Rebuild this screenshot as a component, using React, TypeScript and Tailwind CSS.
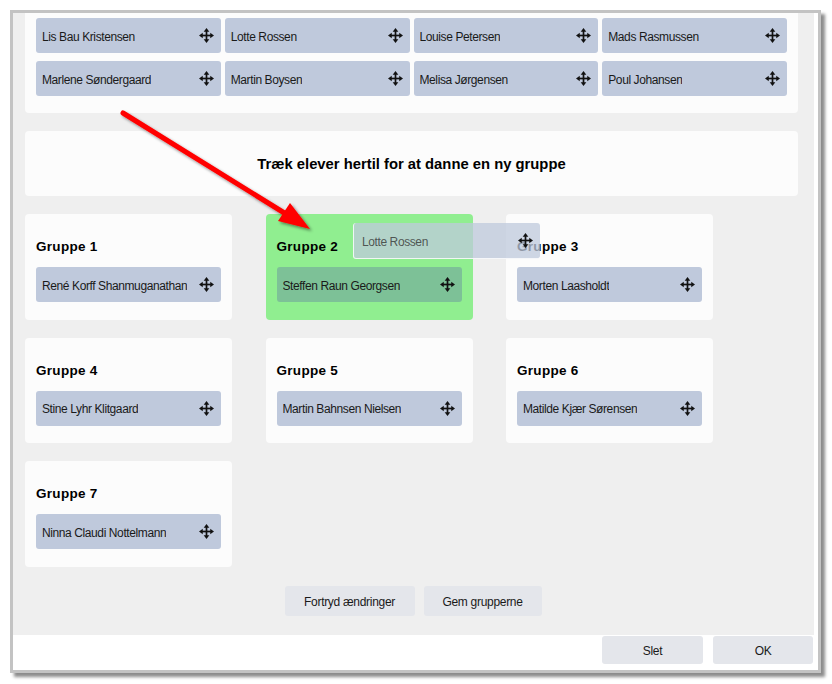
import type { ReactNode } from 'react';

const unassigned = [
  'Lis Bau Kristensen',
  'Lotte Rossen',
  'Louise Petersen',
  'Mads Rasmussen',
  'Marlene Søndergaard',
  'Martin Boysen',
  'Melisa Jørgensen',
  'Poul Johansen',
];

const groups = [
  { name: 'Gruppe 1', members: ['René Korff Shanmuganathan'] },
  { name: 'Gruppe 2', members: ['Steffen Raun Georgsen'], over: true },
  { name: 'Gruppe 3', members: ['Morten Laasholdt'] },
  { name: 'Gruppe 4', members: ['Stine Lyhr Klitgaard'] },
  { name: 'Gruppe 5', members: ['Martin Bahnsen Nielsen'] },
  { name: 'Gruppe 6', members: ['Matilde Kjær Sørensen'] },
  { name: 'Gruppe 7', members: ['Ninna Claudi Nottelmann'] },
];

function MoveIcon() {
  return (
    <svg width="15" height="15" viewBox="0 0 16 16" className="shrink-0 text-[#111]">
      <rect x="7.1" y="3" width="1.8" height="10" fill="currentColor" />
      <rect x="3" y="7.1" width="10" height="1.8" fill="currentColor" />
      <polygon points="8,0 11,4 5,4" fill="currentColor" />
      <polygon points="8,16 11,12 5,12" fill="currentColor" />
      <polygon points="0,8 4,5 4,11" fill="currentColor" />
      <polygon points="16,8 12,5 12,11" fill="currentColor" />
    </svg>
  );
}

function Student({ name, tint = false }: { name: string; tint?: boolean }) {
  return (
    <div
      className={`flex h-[35px] items-center justify-between rounded-[3px] pl-[6px] pr-[7px] text-[12px] tracking-[-0.4px] text-[#1a1a1a] ${
        tint ? 'bg-[#7dc197]' : 'bg-[#bfc9dc]'
      }`}
    >
      <span className="truncate pt-[2px]">{name}</span>
      <MoveIcon />
    </div>
  );
}

function Button({ children, className = '' }: { children: ReactNode; className?: string }) {
  return (
    <button
      type="button"
      className={`rounded-[3px] bg-[#e4e6eb] pt-[1px] text-[12px] tracking-[-0.3px] text-[#1a1a1a] ${className}`}
    >
      {children}
    </button>
  );
}

export default function App() {
  return (
    <div className="relative h-[684px] w-[832px] overflow-hidden bg-white font-['Liberation_Sans',Arial,sans-serif]">
      <div className="ml-[10px] mt-[10px] flex h-[663px] w-[811px] flex-col border-[3px] border-[#c3c3c3] bg-white shadow-[4px_4px_3px_rgba(0,0,0,0.45)]">
        {/* scrolled pane with students and groups */}
        <div className="relative mr-[4px] flex flex-1 flex-col gap-[18px] overflow-hidden bg-[#efefef] pl-[12px] pr-[16px]">
          <div className="rounded-b-[4px] bg-[#fcfcfc] px-[11px] pb-[17px] pt-[5px]">
            <div className="grid grid-cols-4 gap-x-[4px] gap-y-[8px]">
              {unassigned.map(n => (
                <Student key={n} name={n} />
              ))}
            </div>
          </div>

          <div className="flex h-[65px] items-center justify-center rounded-[4px] bg-[#fcfcfc] pt-[2px] text-[14.8px] font-bold text-black">
            Træk elever hertil for at danne en ny gruppe
          </div>

          <div className="grid grid-cols-[207px_207px_207px] gap-x-[33.5px] gap-y-[18px]">
            {groups.map(g => (
              <div
                key={g.name}
                className={`flex h-[105.5px] flex-col rounded-[4px] px-[11px] pt-[24px] ${
                  g.over ? 'bg-[#90ee90]' : 'bg-[#fcfcfc]'
                }`}
              >
                <div className="h-[16px] pt-[1px] text-[13.5px] font-bold leading-[16px] tracking-[0.3px] text-black">
                  {g.name}
                </div>
                <div className="mt-[13px]">
                  {g.members.map(m => (
                    <Student key={m} name={m} tint={g.over} />
                  ))}
                </div>
              </div>
            ))}
          </div>

          <div className="mt-[1.5px] flex justify-center gap-[9px] pl-[3px]">
            <Button className="h-[30px] w-[130px]">Fortryd ændringer</Button>
            <Button className="h-[30px] w-[118px]">Gem grupperne</Button>
          </div>

          {/* student being dragged */}
          <div className="absolute left-[340px] top-[210px] flex h-[36px] w-[187px] items-center justify-between rounded-[3px] border-b border-l border-white/80 bg-[#bfc9dc]/75 pl-[8px] pr-[7px] text-[12px] tracking-[-0.4px] text-[#333]/80">
            <span className="pt-[2px]">Lotte Rossen</span>
            <MoveIcon />
          </div>
        </div>

        <div className="flex h-[35px] justify-end gap-[10px] pr-[5px] pt-[1px]">
          <Button className="h-[28px] w-[101px]">Slet</Button>
          <Button className="h-[28px] w-[100px]">OK</Button>
        </div>
      </div>

      {/* red pointer arrow */}
      <svg width="832" height="684" className="pointer-events-none absolute left-0 top-0">
        <defs>
          <filter id="arrowShadow" x="-20%" y="-20%" width="140%" height="140%">
            <feDropShadow dx="2" dy="2" stdDeviation="1.5" floodColor="#000" floodOpacity="0.45" />
          </filter>
        </defs>
        <g filter="url(#arrowShadow)">
          <line x1="123" y1="113" x2="286" y2="214" stroke="#ff0000" strokeWidth="5" strokeLinecap="round" />
          <polygon points="310,229 278,221 290,203" fill="#ff0000" />
        </g>
      </svg>
    </div>
  );
}
